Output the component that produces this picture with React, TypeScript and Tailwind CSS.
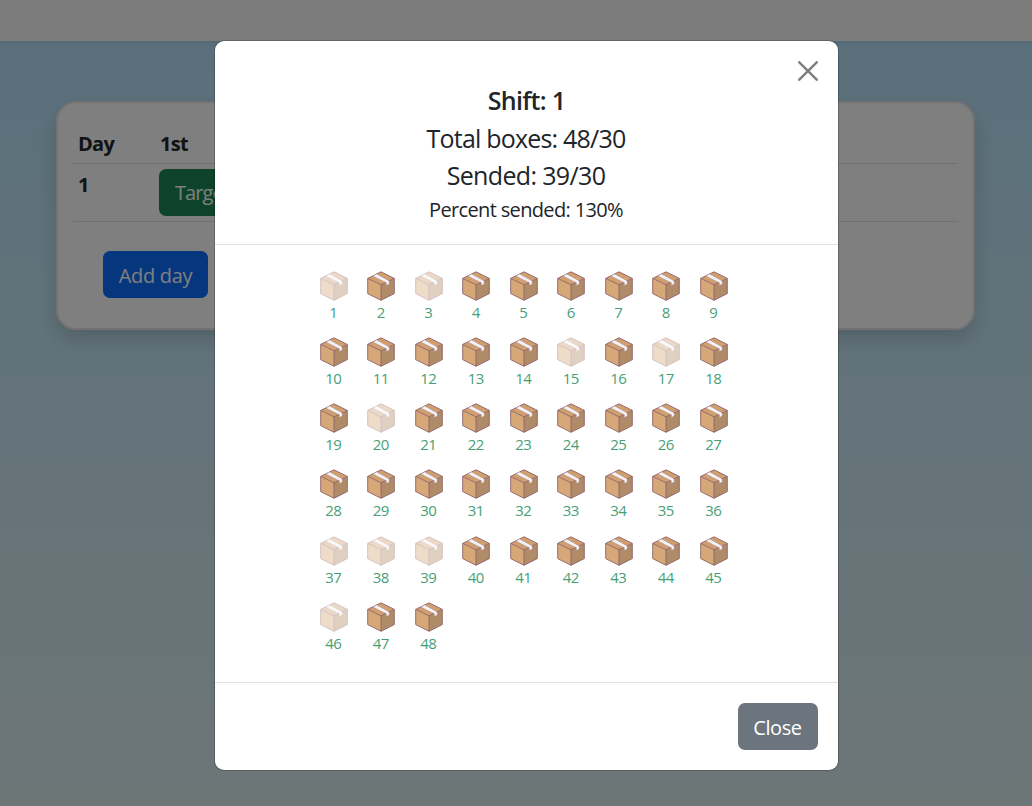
import React from "react";

const faded = new Set([1, 3, 15, 17, 20, 37, 38, 39, 46]);
const boxes = Array.from({ length: 48 }, (_, i) => i + 1);

function BoxIcon({ dim }: { dim: boolean }) {
  return (
    <svg width="28" height="30" viewBox="0 0 28 30" className={dim ? "opacity-40" : ""}>
      <path d="M.7 7.4 14 13.8v15.5L.7 22.6z" fill="#d6a878" />
      <path d="M27.3 7.4 14 13.8v15.5l13.3-6.7z" fill="#b08b68" />
      <path d="M.7 7.4 14 .8l13.3 6.6L14 13.8z" fill="#cf9f6f" />
      <path d="M.7 7.4 14 .8l13.3 6.6v15.2L14 29.3.7 22.6zM.7 7.4 14 13.8l13.3-6.4M14 13.8v15.5" fill="none" stroke="#8f6268" strokeWidth=".9" strokeLinejoin="round" />
      <path d="M6 5.1 9.6 3.1 22.2 9.9v3.2l-2.8 1.3v-2.7z" fill="#f5f3fa" stroke="#9c7880" strokeWidth=".3" strokeLinejoin="round" />
    </svg>
  );
}

export default function App() {
  return (
    <div className="relative h-[806px] w-full overflow-hidden bg-linear-to-b from-[#b2e0f8] to-[#dbecee] font-['Open_Sans','Noto_Sans',sans-serif] text-[20px] leading-[30px] text-[#212529]">
      <div className="h-[41px] bg-[#f8f9fa] shadow-[0_2px_5px_rgba(0,0,0,0.08)]" />
      <main className="pt-[60px] pl-[56px]">
        <section className="h-[229px] w-[919px] rounded-[20px] border-2 border-[#e4e4e4] bg-white px-[15px] pt-[22px] shadow-[0_10px_20px_rgba(0,0,0,0.15)]">
          <div className="flex h-[39px] items-center border-b border-[#dee2e6] px-[5px] font-bold tracking-[-0.7px]">
            <div className="w-[82px]">Day</div>
            <div>1st</div>
          </div>
          <div className="flex h-[58px] border-b border-[#dee2e6] px-[5px] pt-[5px]">
            <div className="w-[81px] pt-px font-bold">1</div>
            <button className="h-[47px] rounded-[7px] bg-[#198754] px-[16px] pt-px tracking-[-0.9px] text-white">Target</button>
          </div>
          <button className="mt-[29px] ml-[30px] h-[47px] w-[105px] rounded-[7px] bg-[#0d6efd] pt-[2px] tracking-[-0.3px] text-white">Add day</button>
        </section>
      </main>
      <div className="absolute inset-0 flex items-start bg-black/50 pt-[40px] pl-[214px]">
        <div role="dialog" className="relative flex h-[731px] w-[625px] flex-col rounded-[10px] border border-black/20 bg-white bg-clip-padding">
          <button aria-label="Close" className="absolute top-[20px] right-[20px]">
            <svg width="20" height="20" viewBox="0 0 20 20" fill="none" stroke="#7f7f7f" strokeWidth="2.5" strokeLinecap="round">
              <path d="M1.3 1.3l17.4 17.4M18.7 1.3L1.3 18.7" />
            </svg>
          </button>
          <header className="flex h-[204px] flex-col items-center border-b border-[#dee2e6] pt-[41px] text-[25px] leading-[37.5px]">
            <h5 className="font-semibold tracking-[-0.7px]">Shift: 1</h5>
            <p className="pr-px tracking-[-0.8px]">Total boxes: 48/30</p>
            <p className="pr-px tracking-[-0.65px]">Sended: 39/30</p>
            <p className="pr-px text-[20px] leading-[30px] tracking-[-0.65px]">Percent sended: 130%</p>
          </header>
          <div className="h-[438px] border-b border-[#dee2e6] pt-[25.5px] pl-[94.9px]">
            <div className="grid w-[427.5px] auto-rows-[66.25px] grid-cols-9">
              {boxes.map((n) => (
                <div key={n} className="flex flex-col items-center">
                  <BoxIcon dim={faded.has(n)} />
                  <span className="pr-px text-[15px] leading-[23.5px] tracking-[-0.6px] text-[#479f76]">{n}</span>
                </div>
              ))}
            </div>
          </div>
          <footer className="flex justify-end p-[20px]">
            <button className="h-[47px] w-[80px] rounded-[7px] bg-[#6c757d] pt-[2px] pr-px tracking-[-0.4px] text-white">Close</button>
          </footer>
        </div>
      </div>
    </div>
  );
}
